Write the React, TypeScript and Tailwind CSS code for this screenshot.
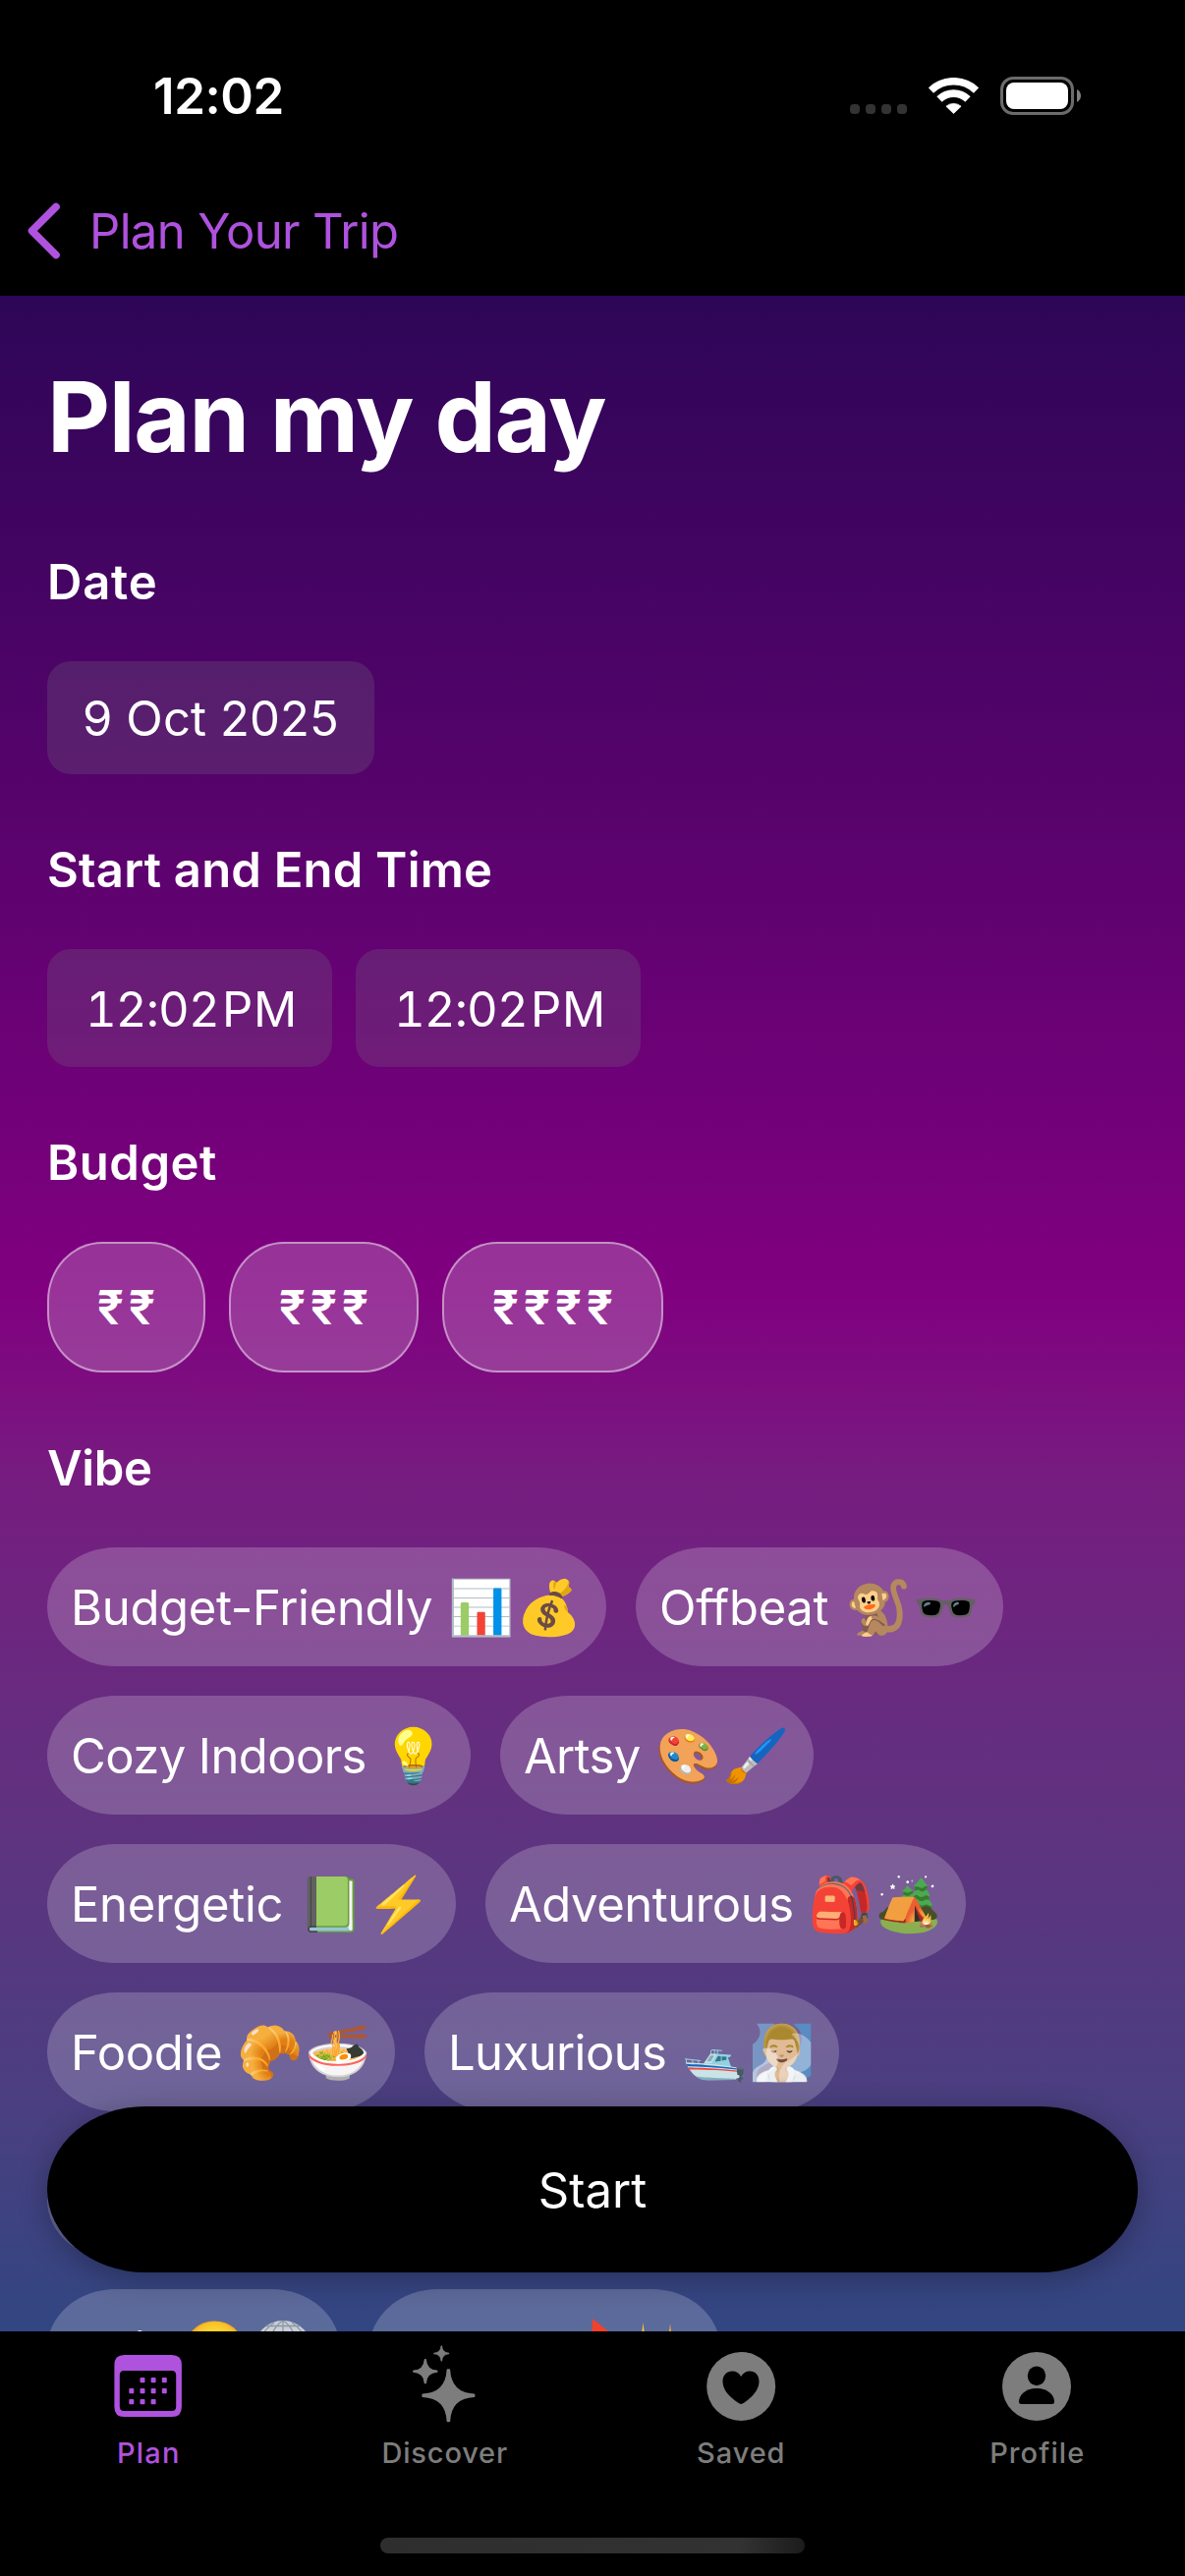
import type { ReactNode } from "react";

type Vibe = { label: string; emojis: ReactNode[]; width: string; tracking: string };

function DiscoBall() {
  return (
    <svg width="62" height="62" viewBox="0 0 62 62" fill="none">
      <circle cx="31" cy="31.500" r="29.500" fill="#c9ced8" />
      <path
        d="M31 2V61M31 2C12 14 12 49 31 61M31 2C50 14 50 49 31 61M22 4C0 20 0 44 22 59M40 4C62 20 62 44 40 59M14 7.500H48M6 16.500H56M2 27H60M2 38H60M7 49H55"
        stroke="#8d96a5"
        strokeWidth="1.300"
      />
    </svg>
  );
}

function RedHeel() {
  return (
    <svg width="62" height="62" viewBox="0 0 62 62">
      <path d="M28 0L60 25.500L50 60L26 40Z" fill="#f4412c" />
    </svg>
  );
}

function GoldSparks() {
  return (
    <svg width="62" height="62" viewBox="0 0 62 62">
      <path d="M10.500 4L13 24L22 30L13 36L10.500 58L8 36L0 30L8 24Z" fill="#f5c344" />
      <path d="M38 5L40.500 24L54 30L40.500 36L38 58L35.500 36L24 30L35.500 24Z" fill="#f0a03c" />
    </svg>
  );
}

const vibeRows: Vibe[][] = [
  [
    { label: "Budget-Friendly", emojis: ["📊", "💰"], width: "w-[569px]", tracking: "tracking-[-0.32px]" },
    { label: "Offbeat", emojis: ["🐒", "🕶️"], width: "w-[374px]", tracking: "tracking-[-0.3px]" },
  ],
  [
    { label: "Cozy Indoors", emojis: ["💡"], width: "w-[431px]", tracking: "tracking-[-0.6px]" },
    { label: "Artsy", emojis: ["🎨", "🖌️"], width: "w-[319px]", tracking: "tracking-[-0.7px]" },
  ],
  [
    { label: "Energetic", emojis: ["📗", "⚡️"], width: "w-[416px]", tracking: "tracking-[-0.33px]" },
    { label: "Adventurous", emojis: ["🎒", "🏕️"], width: "w-[489px]", tracking: "tracking-[-0.5px]" },
  ],
  [
    { label: "Foodie", emojis: ["🥐", "🍜"], width: "w-[354px]", tracking: "tracking-[-0.32px]" },
    { label: "Luxurious", emojis: ["🛥️", "🧖🏼‍♂️"], width: "w-[422px]", tracking: "tracking-[-0.6px]" },
  ],
];

const lastRow: Vibe[] = [
  { label: "Chill", emojis: ["😌", <DiscoBall />], width: "w-[298px]", tracking: "tracking-[-0.3px]" },
  { label: "Trendy", emojis: [<RedHeel />, <GoldSparks />], width: "w-[357px]", tracking: "tracking-[-0.5px]" },
];

function StatusBar() {
  return (
    <div className="flex h-[60px] items-start pl-[156px] pr-[106px]">
      <span className="text-[51px] font-semibold leading-[60px] tracking-[-0.44px]">12:02</span>
      <div className="ml-auto mt-[38px] flex gap-[6px]">
        {[0, 1, 2, 3].map((i) => (
          <span key={i} className="size-[10px] rounded-[4px] bg-[#333333]" />
        ))}
      </div>
      <svg className="ml-[22px] mt-[11px]" width="51" height="37" viewBox="0 0 51 37" fill="none">
        <path d="M2.4 13.1A33.2 33.2 0 0 1 48.6 13.1" stroke="#fff" strokeWidth="7.6" />
        <path d="M11 22A20.8 20.8 0 0 1 40 22" stroke="#fff" strokeWidth="7.6" />
        <path d="M17.9 29.2A11.7 11.7 0 0 1 33.1 29.2L25.5 36.6Z" fill="#fff" stroke="#fff" strokeWidth="0.8" strokeLinejoin="round" />
      </svg>
      <svg className="ml-[22px] mt-[10px]" width="82" height="39" viewBox="0 0 82 39" fill="none">
        <rect x="1.5" y="1.5" width="72" height="36" rx="11.5" stroke="#6b6b6b" strokeWidth="3" />
        <rect x="6" y="6" width="63" height="27" rx="8" fill="#fff" />
        <path d="M78 13C80.600 14.500 82 16.800 82 19.500S80.600 24.500 78 26Z" fill="#808080" />
      </svg>
    </div>
  );
}

function SectionLabel({ children, tracking }: { children: ReactNode; tracking: string }) {
  return <h2 className={`mb-[49px] whitespace-nowrap text-[49px] font-semibold leading-[62px] ${tracking}`}>{children}</h2>;
}

function TimeField() {
  return (
    <div className="flex h-[120px] w-[290px] items-center rounded-[24px] bg-[#767680]/24 pl-[39px] pt-[3px] text-[49px] leading-[60px]">
      <span className="w-[139px] tabular-nums tracking-[-0.9px]">12:02</span>
      <span className="tracking-[0.7px]">PM</span>
    </div>
  );
}

function BudgetOption({ value, width }: { value: string; width: string }) {
  return (
    <button
      className={`flex h-[133px] items-center justify-center rounded-[56px/60px] border-2 border-white/45 bg-white/20 text-[48px] font-semibold tracking-[5px] ${width}`}
    >
      <span className="-mr-[5px]">{value}</span>
    </button>
  );
}

function VibeChip({ vibe }: { vibe: Vibe }) {
  return (
    <div className={`flex h-[121px] items-center justify-between rounded-[70px/60.5px] bg-white/20 px-[24px] ${vibe.width}`}>
      <span className={`whitespace-nowrap pt-[2px] text-[49px] leading-[60px] ${vibe.tracking}`}>{vibe.label}</span>
      <span className="flex">
        {vibe.emojis.map((e, i) => (
          <span key={i} className="flex w-[69px] justify-center text-[54px] leading-[60px]">
            {e}
          </span>
        ))}
      </span>
    </div>
  );
}

function CalendarIcon() {
  const dots = [
    [31.5, 40], [42.6, 40], [53.8, 40],
    [20.3, 51], [31.5, 51], [42.6, 51], [53.8, 51],
    [20.3, 62], [31.5, 62], [42.6, 62],
  ];
  return (
    <svg width="80" height="90" viewBox="0 0 80 90" fill="currentColor">
      <path
        fillRule="evenodd"
        d="M15.400 17H63.900Q73.900 17 73.900 27V70Q73.900 80 63.900 80H15.400Q5.400 80 5.400 70V27Q5.400 17 15.400 17ZM15.300 33Q10.800 33 10.800 37.500V69.500Q10.800 74 15.300 74H63.700Q68.200 74 68.200 69.500V37.500Q68.200 33 63.700 33Z"
      />
      {dots.map(([x, y]) => (
        <rect key={`${x}-${y}`} x={x} y={y} width="5" height="5.300" rx="1" />
      ))}
    </svg>
  );
}

function SparklesIcon() {
  return (
    <svg width="80" height="90" viewBox="0 0 80 90" fill="currentColor" stroke="currentColor" strokeLinejoin="round">
      <path strokeWidth="2" d="M43.600 32.300H45.200Q46.400 56.300 70.400 57.500V59.100Q46.400 60.300 45.200 84.300H43.600Q42.400 60.300 18.400 59.100V57.500Q42.400 56.300 43.600 32.300Z" />
      <path strokeWidth="1.200" d="M20.300 21.700H21.300Q22 32.500 32.800 33.200V34.200Q22 34.900 21.300 45.700H20.300Q19.600 34.900 8.800 34.200V33.200Q19.600 32.500 20.300 21.700Z" />
      <path strokeWidth="0.800" d="M37 7.800H37.600Q38 14.800 45 15.200V15.800Q38 16.200 37.600 23.200H37Q36.600 16.200 29.600 15.800V15.200Q36.600 14.800 37 7.800Z" />
    </svg>
  );
}

function HeartIcon() {
  return (
    <svg width="80" height="90" viewBox="0 0 80 90" fill="currentColor">
      <circle cx="40.200" cy="49" r="35" />
      <path
        fill="#000"
        d="M40.200 67C39.300 67 38 66.200 37 65.500C28 59.500 21.500 52.500 21.500 44C21.500 37.500 26 33.500 31.200 33.500C35.200 33.500 38.500 35.500 40.200 39C41.900 35.500 45.200 33.500 49.200 33.500C54.400 33.500 58.500 37.500 58.500 44C58.500 52.500 52 59.500 43.400 65.500C42.400 66.200 41.100 67 40.200 67Z"
      />
    </svg>
  );
}

function ProfileIcon() {
  return (
    <svg width="80" height="90" viewBox="0 0 80 90" fill="currentColor">
      <circle cx="40" cy="49" r="35" />
      <ellipse cx="40" cy="38.300" rx="9.200" ry="9.900" fill="#000" />
      <path fill="#000" d="M22 64.500C22 58.500 28 51 40 51S58 58.500 58 64.500Q58 67 55.500 67H24.500Q22 67 22 64.500Z" />
    </svg>
  );
}

function Tab({ icon, label, tracking, active }: { icon: ReactNode; label: string; tracking: string; active?: boolean }) {
  return (
    <button className={`flex flex-1 flex-col items-center ${active ? "text-[#af52de]" : "text-[#7d7d7d]"}`}>
      {icon}
      <span className={`mt-[9px] pl-px text-[29px] font-medium leading-[36px] ${tracking}`}>{label}</span>
    </button>
  );
}

export default function App() {
  return (
    <div className="flex h-[2622px] w-[1206px] flex-col overflow-hidden bg-black font-[Inter,'Noto_Color_Emoji',sans-serif] text-white">
      <header className="h-[301px] shrink-0 pt-[68px]">
        <StatusBar />
        <div className="mt-[77px] flex h-[60px] items-center gap-[30px] pl-[28px] text-[#af52de]">
          <svg width="33" height="58" viewBox="0 0 33 58" fill="none">
            <path d="M29 4.500L4.500 29L29 53.500" stroke="currentColor" strokeWidth="7.600" strokeLinecap="round" strokeLinejoin="round" />
          </svg>
          <span className="whitespace-nowrap pt-[2px] text-[49px] leading-[60px] tracking-[-0.65px]">Plan Your Trip</span>
        </div>
      </header>

      <main className="relative h-[2072px] shrink-0 overflow-hidden bg-[linear-gradient(180deg,#2d0657_0%,#800080_48.75%,#7c0f80_54%,#761d80_58.4%,#5f337f_75.2%,#484080_90.2%,#314682_100%)] px-[48px] pt-[63px]">
        <h1 className="whitespace-nowrap text-[99px] font-bold leading-[120px] tracking-[-1.35px]">Plan my day</h1>

        <section className="mt-[78px]">
          <SectionLabel tracking="tracking-[0.8px]">Date</SectionLabel>
          <div className="flex h-[115px] w-[333px] items-center rounded-[24px] bg-[#767680]/24 pl-[36px] pt-[2px] text-[49px] leading-[60px] tracking-[0.1px]">
            9 Oct 2025
          </div>
        </section>

        <section className="mt-[67px]">
          <SectionLabel tracking="tracking-[0.21px]">Start and End Time</SectionLabel>
          <div className="flex gap-[24px]">
            <TimeField />
            <TimeField />
          </div>
        </section>

        <section className="mt-[67px]">
          <SectionLabel tracking="tracking-[0.5px]">Budget</SectionLabel>
          <div className="flex gap-[24px]">
            <BudgetOption value="₹₹" width="w-[161px]" />
            <BudgetOption value="₹₹₹" width="w-[193px]" />
            <BudgetOption value="₹₹₹₹" width="w-[225px]" />
          </div>
        </section>

        <section className="mt-[67px]">
          <SectionLabel tracking="tracking-[-0.35px]">Vibe</SectionLabel>
          <div className="flex flex-col gap-[30px]">
            {vibeRows.map((row) => (
              <div key={row[0].label} className="flex gap-[30px]">
                {row.map((vibe) => (
                  <VibeChip key={vibe.label} vibe={vibe} />
                ))}
              </div>
            ))}
            <div className="h-[121px] w-[420px] rounded-[70px/60.5px] bg-white/20" />
            <div className="flex gap-[30px]">
              {lastRow.map((vibe) => (
                <VibeChip key={vibe.label} vibe={vibe} />
              ))}
            </div>
          </div>
        </section>

        <button className="absolute bottom-[60px] left-[48px] h-[169px] w-[1110px] rounded-[100px/84.5px] bg-black pt-[2px] text-[49px] leading-[60px] shadow-[0_6px_30px_rgba(0,0,0,0.3)]">
          Start
        </button>
      </main>

      <nav className="flex h-[249px] shrink-0 flex-col items-center pt-[7px]">
        <div className="flex w-full">
          <Tab icon={<CalendarIcon />} label="Plan" tracking="tracking-[1.2px]" active />
          <Tab icon={<SparklesIcon />} label="Discover" tracking="tracking-[0.83px]" />
          <Tab icon={<HeartIcon />} label="Saved" tracking="tracking-[0.9px]" />
          <Tab icon={<ProfileIcon />} label="Profile" tracking="tracking-[1.09px]" />
        </div>
        <div className="mt-[68px] h-[16px] w-[432px] rounded-full bg-linear-to-r from-[#2e2e2e] via-[#323232] via-85% to-[#1c1c1c]" />
      </nav>
    </div>
  );
}
